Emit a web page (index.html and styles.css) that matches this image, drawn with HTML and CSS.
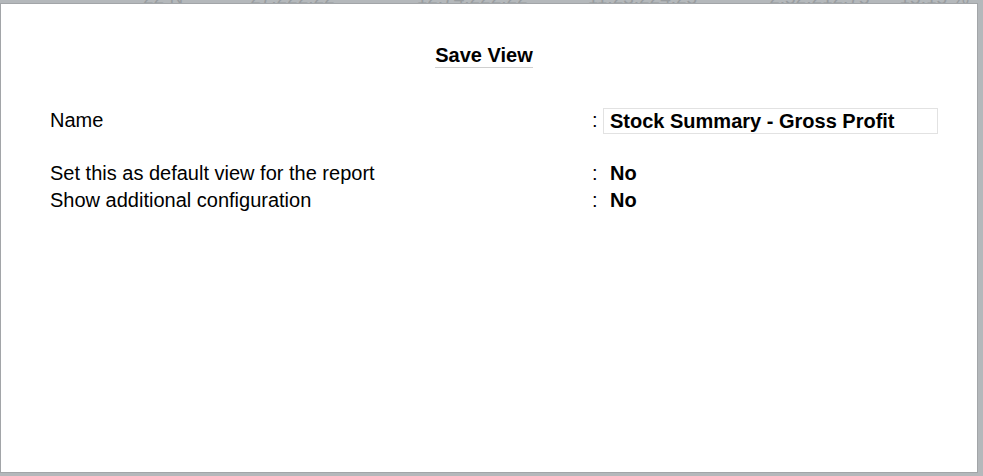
FILE: index.html
```html
<!DOCTYPE html>
<html>
<head>
<meta charset="utf-8">
<link rel="stylesheet" href="styles.css">
</head>
<body>
<div class="backdrop">
  <div class="bg-row">
    <span class="c1">22 N</span>
    <span class="c2">27,222.22</span>
    <span class="c3">12,74,222.22</span>
    <span class="c4">11,23,224.25</span>
    <span class="c5">2,52,212.75</span>
    <span class="c6">15.15 %</span>
  </div>
</div>
<div class="panel">
  <div class="title-wrap"><h1 class="title">Save View</h1></div>
  <div class="form">
    <div class="label">Name</div>
    <div class="colon">:</div>
    <div class="value"><div class="input">Stock Summary - Gross Profit</div></div>

    <div class="label spaced">Set this as default view for the report</div>
    <div class="colon spaced">:</div>
    <div class="value plain spaced">No</div>

    <div class="label">Show additional configuration</div>
    <div class="colon">:</div>
    <div class="value plain">No</div>
  </div>
</div>
</body>
</html>
```
FILE: styles.css
```css
html, body {
  margin: 0;
  padding: 0;
}
body {
  background: #b4b8bb;
  width: 983px;
  height: 476px;
  overflow: hidden;
  font-family: "Liberation Sans", Arial, sans-serif;
  color: #000;
}
.backdrop {
  height: 3px;
  overflow: hidden;
}
.bg-row {
  display: flex;
  font-size: 19px;
  line-height: 20px;
  margin-top: -12px;
  color: #999da0;
  white-space: nowrap;
}
.bg-row .c1 { margin-left: 143px; }
.bg-row .c2 { margin-left: 67px; }
.bg-row .c3 { margin-left: 82px; }
.bg-row .c4 { margin-left: 60px; }
.bg-row .c5 { margin-left: 72px; }
.bg-row .c6 { margin-left: 30px; }
.panel {
  box-sizing: border-box;
  width: 978px;
  height: 470px;
  background: #fff;
  border: 1px solid #a2a5a8;
  padding-top: 39px;
}
.title-wrap {
  display: flex;
  justify-content: center;
  padding-right: 10px;
}
.title {
  margin: 0;
  font-size: 20px;
  font-weight: bold;
  line-height: 24px;
  border-bottom: 1px solid #cfcfcf;
}
.form {
  display: grid;
  grid-template-columns: 541px 12px 335px;
  margin-top: 39px;
  padding-left: 49px;
  font-size: 20px;
  line-height: 27px;
  align-items: center;
}
.colon {
  padding-left: 1px;
}
.spaced {
  margin-top: 26px;
}
.value.plain {
  padding-left: 7px;
  font-weight: bold;
}
.input {
  box-sizing: border-box;
  height: 26px;
  border: 1px solid #e2e2e2;
  padding-left: 6px;
  line-height: 24px;
  font-weight: bold;
}
```
